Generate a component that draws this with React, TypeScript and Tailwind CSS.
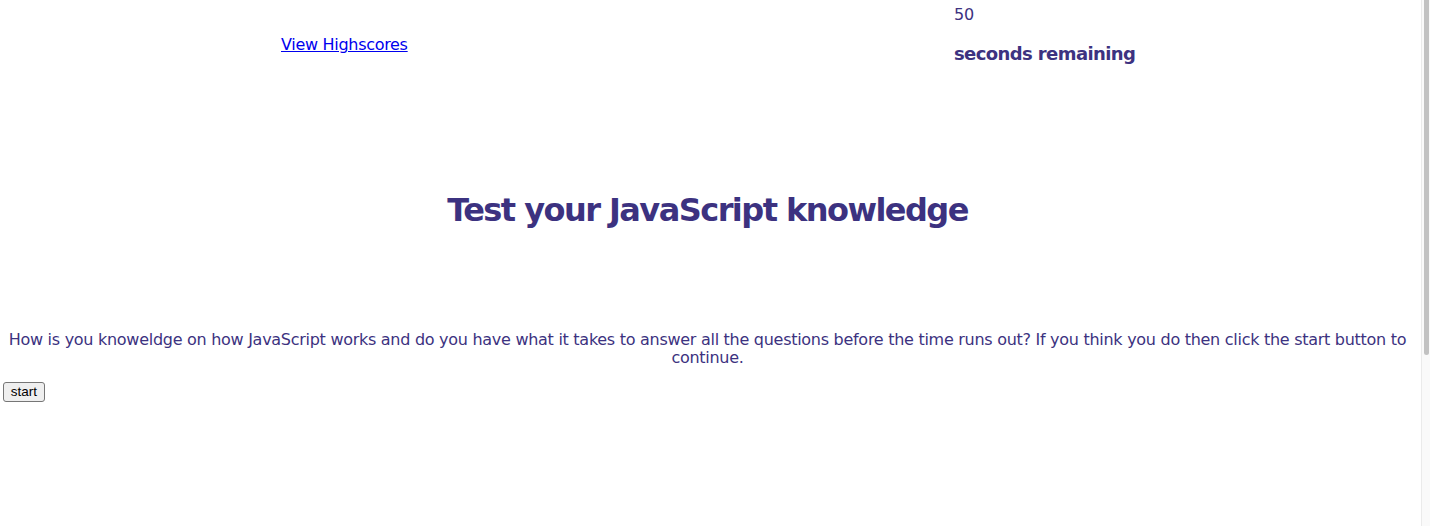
const ink = "text-[#3c3280]";

function Scrollbar() {
  return (
    <div className="flex w-[15px] shrink-0 h-[526px]">
      <div className="w-[6px] bg-white" />
      <div className="w-[1px] bg-[#ebebeb]" />
      <div className="flex-1 bg-[#fafafa] pl-[2px] pr-[1px]">
        <div className="h-[355px] rounded-b-full bg-[#c2c2c2]" />
      </div>
    </div>
  );
}

export default function App() {
  return (
    <div className="flex h-[526px] overflow-hidden bg-white font-['DejaVu_Sans',sans-serif]">
      <main className="flex-1 px-[8px]">
        {/* Header */}
        <header className="grid grid-cols-[946px_1fr]">
          <div className="pl-[273px] pt-[33px]">
            <a
              href="#"
              className="text-[16px] leading-[19px] tracking-[-0.3px] text-[#0000ee] underline"
            >
              View Highscores
            </a>
          </div>
          <div className={ink}>
            <p className="pt-[5px] text-[16px] leading-[19px] tracking-[-0.3px]">50</p>
            <h3 className="mt-[19px] text-[18px] leading-[22px] font-bold tracking-[-0.6px]">
              seconds remaining
            </h3>
          </div>
        </header>

        {/* Intro */}
        <section className={`${ink} text-center`}>
          <h1 className="mt-[127px] text-[32px] leading-[37px] font-bold tracking-[-1.55px]">
            Test your JavaScript knowledge
          </h1>
          <p className="-mx-[3px] mt-[102px] text-[16px] leading-[18px] tracking-[-0.28px]">
            How is you knoweldge on how JavaScript works and do you have what it
            takes to answer all the questions before the time runs out? If you
            think you do then click the start button to continue.
          </p>
        </section>

        <div className="mt-[12px] -ml-[5px]">
          <button className="h-[20px] w-[42px] rounded-[3px] border border-[#767676] bg-[#efefef] font-['Liberation_Sans',sans-serif] text-[13.5px] leading-[16px] text-black">
            start
          </button>
        </div>
      </main>
      <Scrollbar />
    </div>
  );
}
